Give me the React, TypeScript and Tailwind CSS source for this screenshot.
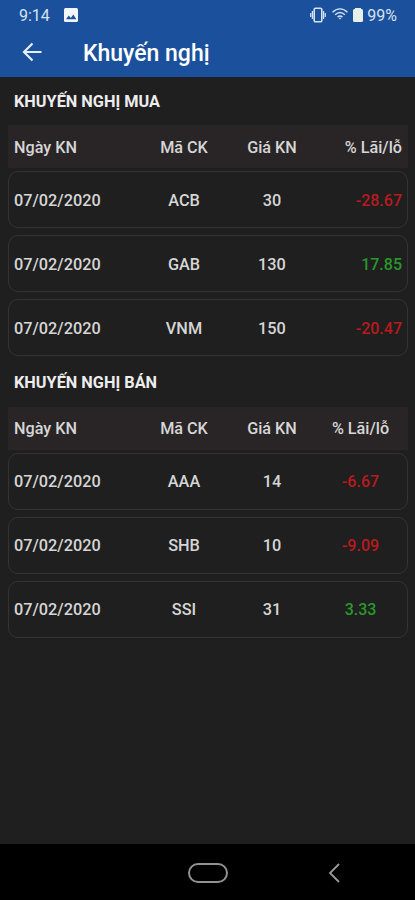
type Row = { date: string; code: string; price: string; change: string }

const buys: Row[] = [
  { date: '07/02/2020', code: 'ACB', price: '30', change: '-28.67' },
  { date: '07/02/2020', code: 'GAB', price: '130', change: '17.85' },
  { date: '07/02/2020', code: 'VNM', price: '150', change: '-20.47' },
]

const sells: Row[] = [
  { date: '07/02/2020', code: 'AAA', price: '14', change: '-6.67' },
  { date: '07/02/2020', code: 'SHB', price: '10', change: '-9.09' },
  { date: '07/02/2020', code: 'SSI', price: '31', change: '3.33' },
]

function StatusBar() {
  return (
    <div className="flex h-[30px] items-center pr-[18px] pl-[19px] text-[#d5e2f2]">
      <span className="w-[45px] pt-px text-base leading-none">9:14</span>
      <svg viewBox="0 0 14 14" className="h-[14px] w-[14px]">
        <rect width="14" height="14" rx="1.5" fill="#f2f6fb" />
        <path d="M2 11.2 4.8 7.6l2 2.3 2.5-3.3 3 4.6z" fill="#1b519c" />
      </svg>
      <div className="ml-auto flex items-center">
        <svg viewBox="0 0 16 16" className="mr-[6px] h-4 w-4" fill="none" stroke="currentColor" strokeWidth="1.6">
          <rect x="4.2" y="1.2" width="7.6" height="13.6" rx="1.4" />
          <path d="M2.4 4v8M13.6 4v8M.7 6v4M15.3 6v4" strokeWidth="1.2" />
        </svg>
        <svg viewBox="0 0 16 12" className="mr-[5px] mb-0.5 h-3 w-4" fill="none" stroke="currentColor" strokeWidth="1.4">
          <path d="M.6 4.2C5-.2 11-.2 15.4 4.2M3.1 6.7c3-2.8 6.8-2.8 9.8 0M5.5 9c1.6-1.3 3.4-1.3 5 0" />
          <path d="M6.4 9.8h3.2L8 11.6z" fill="currentColor" stroke="none" />
        </svg>
        <svg viewBox="0 0 10 14" className="mr-[4px] h-[14px] w-[10px]" fill="#e8f0ea">
          <path d="M2 0h6v1h.5Q10 1 10 2.5v10Q10 14 8.5 14h-7Q0 14 0 12.5v-10Q0 1 1.5 1H2z" />
        </svg>
        <span className="pt-px text-base leading-none">99%</span>
      </div>
    </div>
  )
}

function AppBar() {
  return (
    <div className="flex h-[47px] items-center pl-[22px] text-white">
      <svg viewBox="0 0 20 20" className="mb-[3px] h-5 w-5" fill="none" stroke="#e6eefa" strokeWidth="2.2">
        <path d="M19.5 10H2M10.5 1.5 2 10l8.5 8.5" />
      </svg>
      <h1 className="ml-[41px] pt-[2px] text-[23px] font-medium">Khuyến nghị</h1>
    </div>
  )
}

function Section({ title, rows, align }: { title: string; rows: Row[]; align: 'right' | 'center' }) {
  const lastColumn = align === 'right' ? 'pr-[6px] text-right' : 'pr-[3px] text-center'
  const offset = align === 'right' ? 'pt-[3px]' : 'pt-px'
  return (
    <section className="pr-[7px] pl-2">
      <h2 className={`flex h-12 items-center pl-[6px] text-[16.3px] font-bold text-[#ededed] ${align === 'right' ? 'pt-[2px]' : ''}`}>
        {title}
      </h2>
      <div
        className={`grid h-[43px] grid-cols-[126px_88px_88px_92px] items-center bg-[#292526] pl-[6px] text-[16.2px] font-medium text-[#d6d6d6] ${offset}`}
      >
        <span>Ngày KN</span>
        <span className="text-center">Mã CK</span>
        <span className="text-center">Giá KN</span>
        <span className={lastColumn}>% Lãi/lỗ</span>
      </div>
      <div className="mt-[3px] flex flex-col gap-[7px]">
        {rows.map((row) => (
          <div
            key={row.code}
            className={`grid h-[57px] grid-cols-[126px_88px_88px_92px] items-center rounded-[10px] border border-[#333333] pl-[5px] text-[16.3px] font-medium text-[#d6d6d6] ${offset}`}
          >
            <span>{row.date}</span>
            <span className="text-center">{row.code}</span>
            <span className="text-center">{row.price}</span>
            <span
              className={`text-base ${lastColumn} ${
                row.change.startsWith('-') ? 'text-[#b81b1e]' : 'text-[#28982d]'
              }`}
            >
              {row.change}
            </span>
          </div>
        ))}
      </div>
    </section>
  )
}

function NavigationBar() {
  return (
    <div className="flex h-14 items-center bg-black pt-px pl-[188px]">
      <span className="h-5 w-10 rounded-full border-2 border-[#929292]" />
      <svg viewBox="0 0 12 20" className="ml-[100px] h-5 w-3" fill="none" stroke="#999999" strokeWidth="1.8">
        <path d="M11 1 2 10l9 9" />
      </svg>
    </div>
  )
}

export default function App() {
  return (
    <div className="flex h-[900px] w-[415px] flex-col bg-[#1f1f1f] font-['Roboto',sans-serif]">
      <header className="h-[77px] bg-[#1b519c]">
        <StatusBar />
        <AppBar />
      </header>
      <main className="flex flex-1 flex-col gap-[3px]">
        <Section title="KHUYẾN NGHỊ MUA" rows={buys} align="right" />
        <Section title="KHUYẾN NGHỊ BÁN" rows={sells} align="center" />
      </main>
      <NavigationBar />
    </div>
  )
}
